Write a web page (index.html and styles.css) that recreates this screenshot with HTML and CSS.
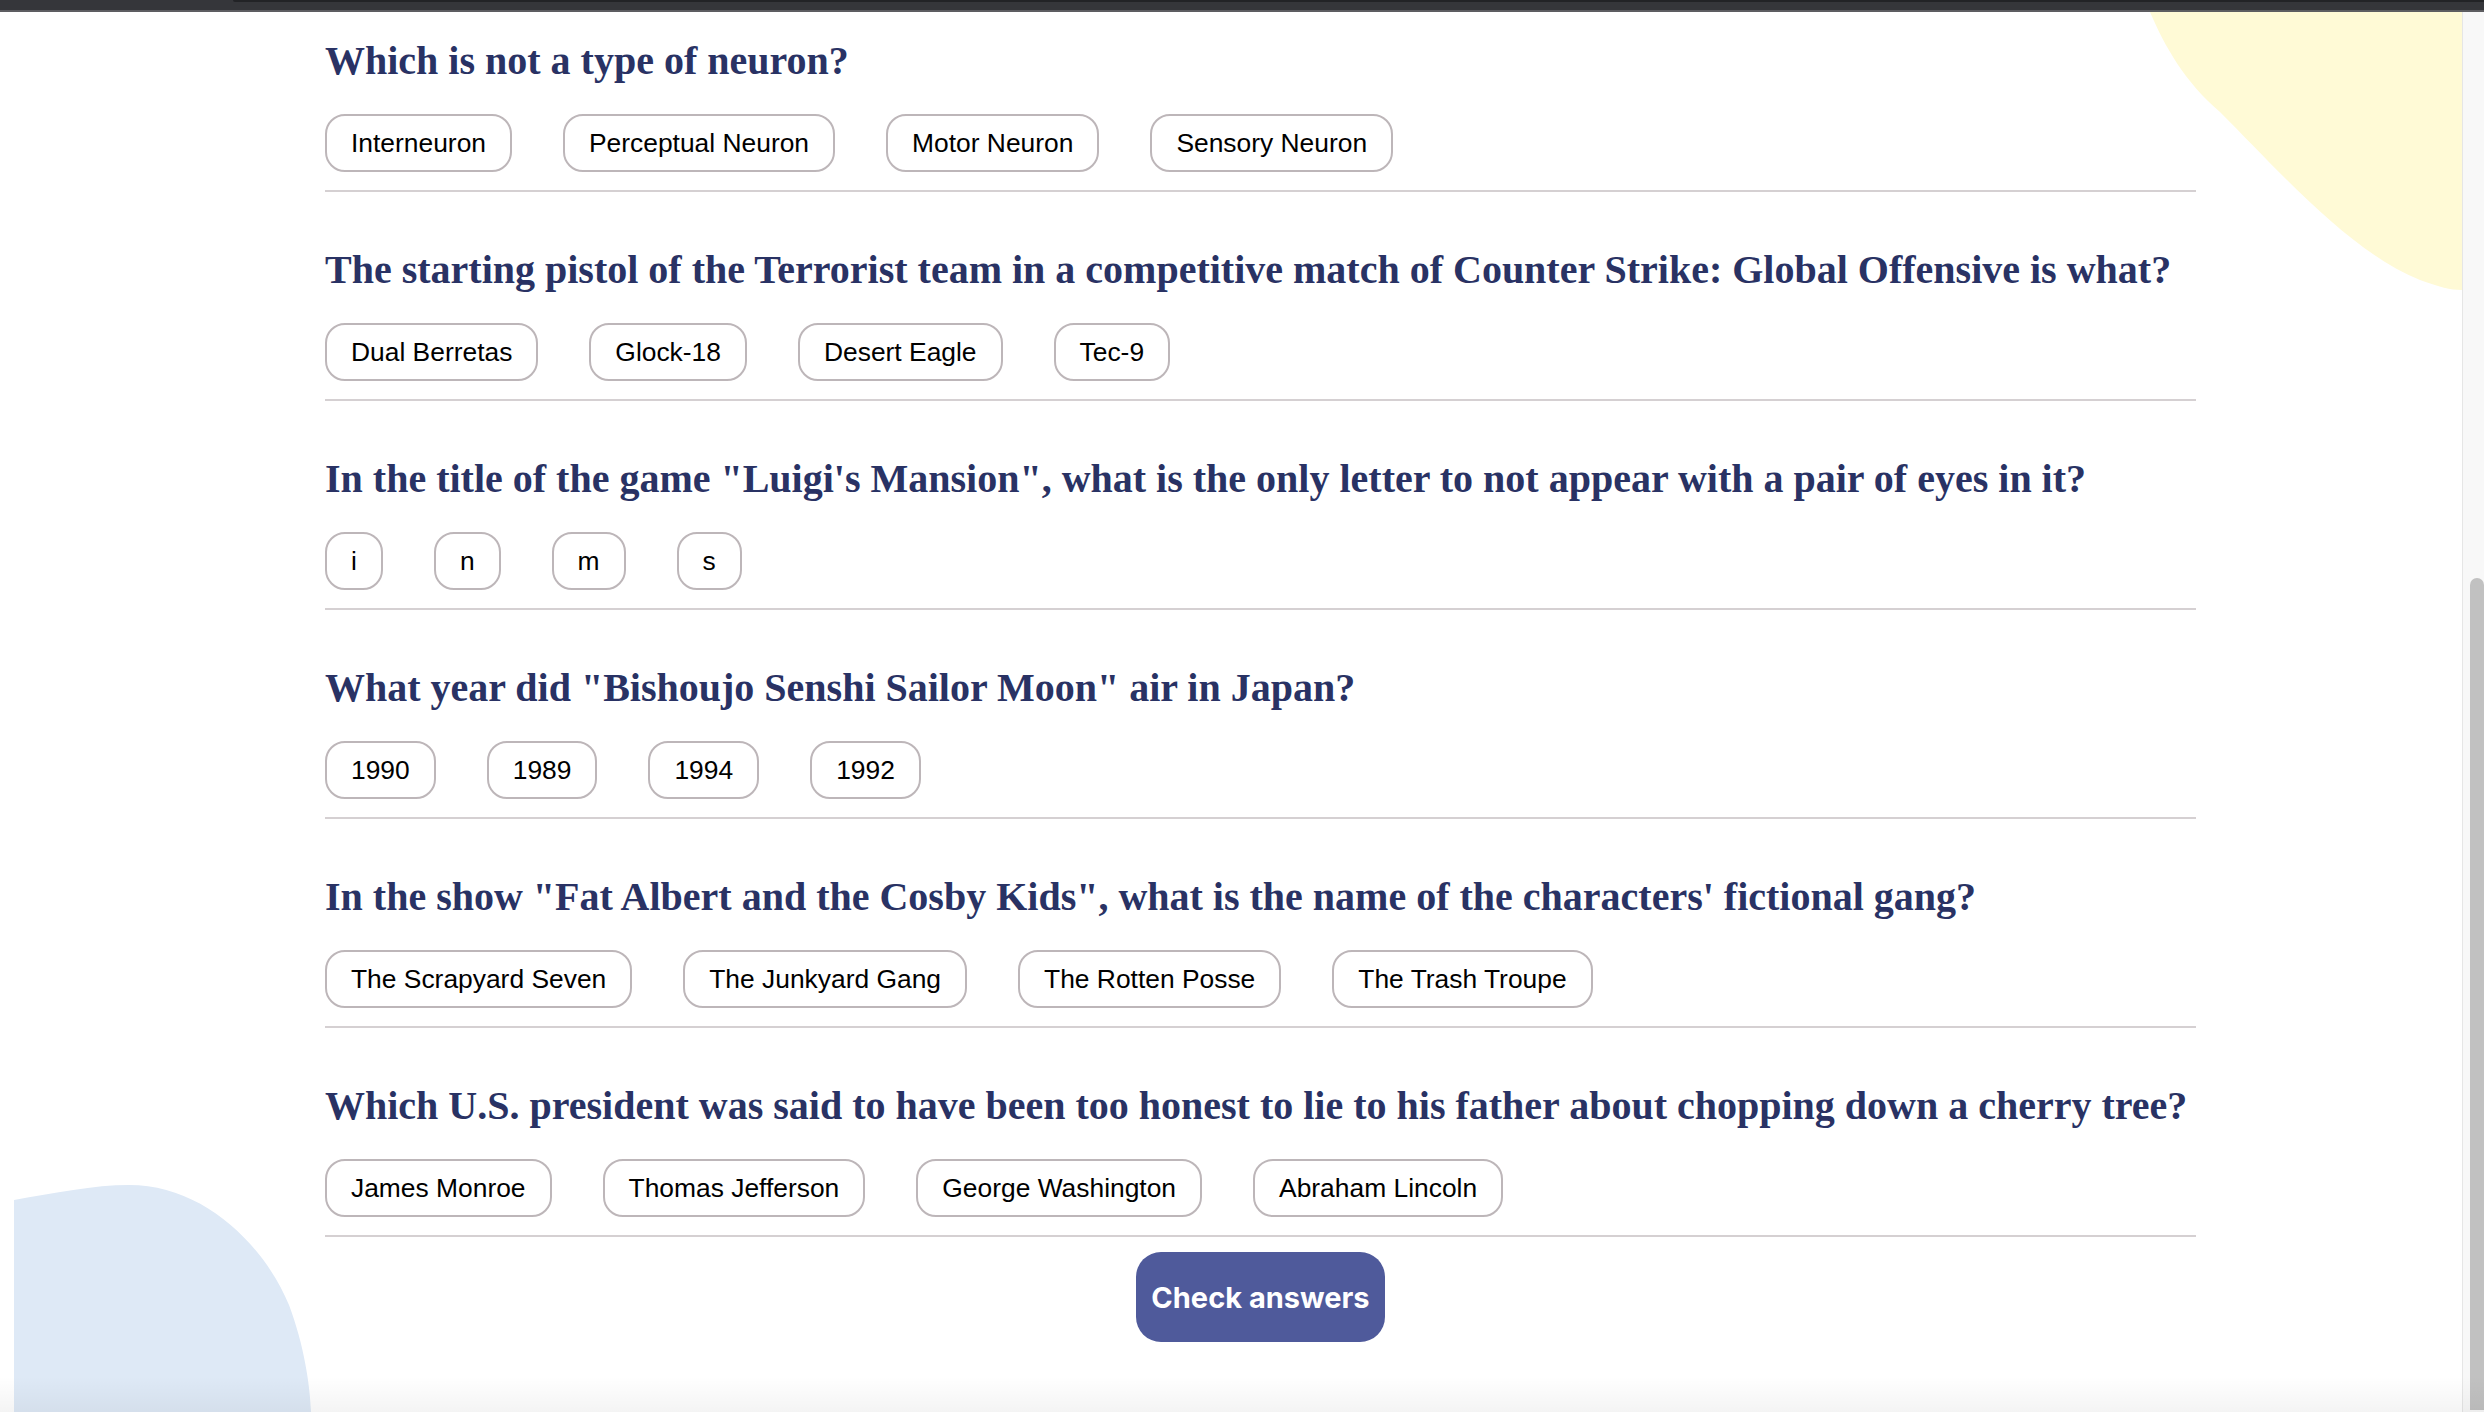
FILE: index.html
```html
<!DOCTYPE html>
<html lang="en">
<head>
<meta charset="utf-8">
<title>Quizzical</title>
<link rel="stylesheet" href="styles.css">
</head>
<body>
<div class="topbar"><div class="tab"></div></div>
<div class="window">
  <main class="page">
    <svg class="blob blob-yellow" width="312" height="280" viewBox="0 0 312 280" aria-hidden="true">
      <path d="M0,0 C15,35 35,70 70,100 C130,160 200,240 270,268 C290,275 300,278 312,278 L312,0 Z" fill="#FFFAD6"/>
    </svg>
    <svg class="blob blob-blue" width="300" height="227" viewBox="0 0 300 227" aria-hidden="true">
      <path d="M0,15 C40,8 80,0 115,0 C190,0 250,60 275,120 C290,160 296,200 297,227 L0,227 Z" fill="#DEE9F6"/>
    </svg>
    <div class="quiz">
      <section class="question">
        <h2 class="q-title">Which is not a type of neuron?</h2>
        <div class="options">
          <button class="option">Interneuron</button>
          <button class="option">Perceptual Neuron</button>
          <button class="option">Motor Neuron</button>
          <button class="option">Sensory Neuron</button>
        </div>
      </section>
      <section class="question">
        <h2 class="q-title">The starting pistol of the Terrorist team in a competitive match of Counter Strike: Global Offensive is what?</h2>
        <div class="options">
          <button class="option">Dual Berretas</button>
          <button class="option">Glock-18</button>
          <button class="option">Desert Eagle</button>
          <button class="option">Tec-9</button>
        </div>
      </section>
      <section class="question">
        <h2 class="q-title">In the title of the game "Luigi's Mansion", what is the only letter to not appear with a pair of eyes in it?</h2>
        <div class="options">
          <button class="option">i</button>
          <button class="option">n</button>
          <button class="option">m</button>
          <button class="option">s</button>
        </div>
      </section>
      <section class="question">
        <h2 class="q-title">What year did "Bishoujo Senshi Sailor Moon" air in Japan?</h2>
        <div class="options">
          <button class="option">1990</button>
          <button class="option">1989</button>
          <button class="option">1994</button>
          <button class="option">1992</button>
        </div>
      </section>
      <section class="question">
        <h2 class="q-title">In the show "Fat Albert and the Cosby Kids", what is the name of the characters' fictional gang?</h2>
        <div class="options">
          <button class="option">The Scrapyard Seven</button>
          <button class="option">The Junkyard Gang</button>
          <button class="option">The Rotten Posse</button>
          <button class="option">The Trash Troupe</button>
        </div>
      </section>
      <section class="question">
        <h2 class="q-title">Which U.S. president was said to have been too honest to lie to his father about chopping down a cherry tree?</h2>
        <div class="options">
          <button class="option">James Monroe</button>
          <button class="option">Thomas Jefferson</button>
          <button class="option">George Washington</button>
          <button class="option">Abraham Lincoln</button>
        </div>
      </section>
      <button class="check-btn">Check answers</button>
    </div>
  </main>
  <div class="scrollbar"><div class="thumb"></div></div>
</div>
<div class="fade"></div>
</body>
</html>
```

FILE: styles.css
```css
* { box-sizing: border-box; }

html, body {
  margin: 0;
  padding: 0;
  width: 2484px;
  height: 1412px;
  overflow: hidden;
  background: #ffffff;
}

body { position: relative; }

.topbar {
  height: 12px;
  background: #35363a;
  border-bottom: 2px solid #5d5d61;
}

.tab {
  margin-left: 233px;
  height: 2px;
  background: #222326;
  border-bottom-left-radius: 8px;
}

.window {
  display: flex;
  height: 1400px;
}

.page {
  flex: 1;
  position: relative;
  overflow: hidden;
  background: #ffffff;
}

.blob { position: absolute; display: block; }
.blob-yellow { top: 0; right: 0; }
.blob-blue { left: 14px; bottom: 0; }

.quiz {
  position: relative;
  margin-left: 325px;
  width: 1871px;
}

.question {
  padding: 54px 0 18px;
  border-bottom: 2px solid #d5d0d2;
}

.question:first-child { padding-top: 25px; }

.q-title {
  margin: 0;
  font-family: "Liberation Serif", "Times New Roman", serif;
  font-weight: 700;
  font-size: 40px;
  line-height: 48px;
  color: #293264;
  white-space: nowrap;
}

.options {
  display: flex;
  gap: 51px;
  margin-top: 29px;
}

.option {
  height: 58px;
  padding: 0 24px;
  border: 2px solid #bdb6b9;
  border-radius: 20px;
  background: #ffffff;
  font-family: "Liberation Sans", Arial, sans-serif;
  font-size: 26.4px;
  color: #000000;
  display: inline-flex;
  align-items: center;
  white-space: nowrap;
}

.check-btn {
  display: block;
  margin: 15px auto 0;
  width: 249px;
  height: 90px;
  border: none;
  border-radius: 25px;
  background: #4f5a9b;
  color: #ffffff;
  font-family: Inter, "Liberation Sans", sans-serif;
  font-weight: 700;
  font-size: 29px;
}

.scrollbar {
  width: 22px;
  background: #f8f8f8;
  border-left: 1px solid #e6e6e6;
  padding: 566px 0 2px 7px;
  display: flex;
  flex-direction: column;
}

.thumb {
  flex: 1;
  background: #c1c1c1;
  border-radius: 7px 7px 0 0;
}

.fade {
  position: absolute;
  left: 0;
  right: 0;
  bottom: 0;
  height: 36px;
  background: linear-gradient(to bottom, rgba(0,0,0,0), rgba(0,0,0,0.045));
  pointer-events: none;
}
```
